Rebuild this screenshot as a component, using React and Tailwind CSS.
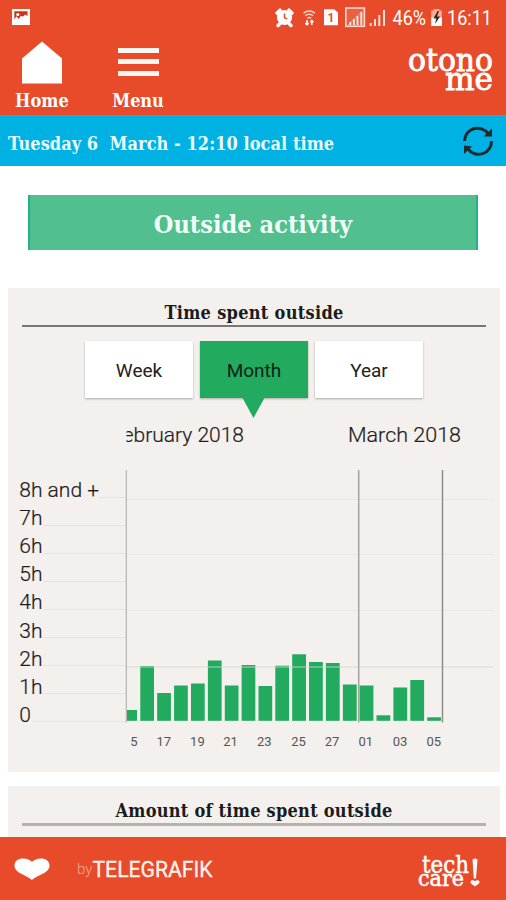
const bars = [
    { x: 127, w: 10, top: 710 },
    { x: 140.3, w: 13.7, top: 666 },
    { x: 157.2, w: 13.7, top: 693 },
    { x: 174.1, w: 13.7, top: 685.5 },
    { x: 191, w: 13.7, top: 683.5 },
    { x: 207.9, w: 13.7, top: 660.5 },
    { x: 224.8, w: 13.7, top: 685.5 },
    { x: 241.6, w: 13.7, top: 665 },
    { x: 258.5, w: 13.7, top: 686 },
    { x: 275.3, w: 13.7, top: 665.7 },
    { x: 292.2, w: 13.8, top: 654.3 },
    { x: 309, w: 13.8, top: 662 },
    { x: 325.9, w: 13.8, top: 663 },
    { x: 342.9, w: 13.8, top: 684.5 },
    { x: 359.6, w: 13.8, top: 685.5 },
    { x: 376.5, w: 13.8, top: 715.3 },
    { x: 393.4, w: 13.8, top: 687.5 },
    { x: 410.3, w: 13.8, top: 680 },
    { x: 427.2, w: 13.8, top: 717.3 },
];

const hours = ['8h and +', '7h', '6h', '5h', '4h', '3h', '2h', '1h', '0'];

const days = [
    { x: 134, label: '5' },
    { x: 163.8, label: '17' },
    { x: 197.4, label: '19' },
    { x: 230.5, label: '21' },
    { x: 264.3, label: '23' },
    { x: 298.6, label: '25' },
    { x: 332, label: '27' },
    { x: 365.8, label: '01' },
    { x: 400, label: '03' },
    { x: 433.7, label: '05' },
];

const slab = "font-['DejaVu_Serif_Condensed','DejaVu_Serif',serif] font-bold [font-stretch:condensed] whitespace-pre";

function StatusIcons() {
    return (
        <svg width="114" height="24" viewBox="272 6 114 24" fill="#fff">
            {/* alarm */}
            <path d="M280 10.200L277 13M289 10.200l3 2.800M279.500 24l-1.500 1.500M289.500 24l1.500 1.500" stroke="#fff" strokeWidth="3.500" strokeLinecap="round" />
            <circle cx="284.500" cy="17.500" r="7.600" />
            <path d="M284.500 13.500v4.200l2.700 1.200" fill="none" stroke="#e84b2a" strokeWidth="1.500" />
            {/* wifi */}
            <path d="M303.500 13.200q5.700-4.400 11.400 0M305.300 15.700q3.900-2.800 7.800 0M307.200 18q2-1.200 4 0" fill="none" stroke="#fbd5cb" strokeWidth="1.500" />
            <path d="M307 20v4.500m-1.600-1.400l1.600 1.600 1.600-1.600M311.800 25v-4.500m-1.600 1.600l1.600-1.600 1.600 1.600" fill="none" stroke="#fff" strokeWidth="1.500" />
            {/* sim */}
            <path d="M324 9.300h10l4 3.200v12.800h-14z" />
            <text x="331" y="22" fontSize="12" fontWeight="700" textAnchor="middle" fill="#e84b2a" fontFamily="Roboto, sans-serif">1</text>
            {/* signals */}
            <rect x="345.800" y="8" width="18.600" height="18.300" fill="#fff" fillOpacity="0.12" stroke="#fbd9d0" strokeWidth="1.600" />
            <path d="M348 25l14-13.500" stroke="#f7b6a5" strokeWidth="0.800" />
            <path d="M350.300 25v-3M353.900 25v-6M357.500 25v-9M361.300 25V12" stroke="#fde8e2" strokeWidth="1.900" />
            <path d="M370.700 26v-3M375 26v-7M379.300 26V15M384 26V10" stroke="#fbe0d8" strokeWidth="2" />
        </svg>
    );
}

function StatusBar() {
    return (
        <div className="flex h-9 items-center">
            <svg className="mb-0.5 ml-3" width="18" height="16" viewBox="0 0 18 16">
                <path d="M0 0h18v16H0z" fill="#fff" />
                <path d="M2.300 2.300h13.200v5l-2.200-1.700-2.200 2-2.400-.7-2.100 3-2-2.600-2.300 3z" fill="#cf3317" />
                <circle cx="5.800" cy="5.500" r="1.600" fill="#fff" />
            </svg>
            <div className="ml-auto flex items-center pr-3">
                <StatusIcons />
                <svg className="ml-1.5 overflow-visible" width="36" height="30" viewBox="0 0 36 30" fill="#fff" fontFamily="Roboto, sans-serif">
                    <text x="0.500" y="22.300" fontSize="20" textLength="33.500" lengthAdjust="spacingAndGlyphs">46%</text>
                </svg>
                <svg className="ml-0.5" width="13" height="20" viewBox="0 0 13 20">
                    <path d="M3.500 2.500V1h6v1.500h2.300V10H1.200V2.500z" fill="#f6ab97" />
                    <path d="M1.200 9.500h10.800v8.500H1.200z" fill="#fff" />
                    <path d="M7.700 3L3.500 10.500h2.800L5 16l5-7.500H7L9 3z" fill="#33221d" />
                </svg>
                <svg className="ml-[3px] overflow-visible" width="48" height="30" viewBox="0 0 48 30" fill="#fff" fontFamily="Roboto, sans-serif">
                    <text x="1" y="22.300" fontSize="20" textLength="45" lengthAdjust="spacingAndGlyphs">16:11</text>
                </svg>
            </div>
        </div>
    );
}

function Header() {
    return (
        <header className="h-[115px] bg-[#e84b2a] text-white">
            <StatusBar />
            <div className="flex h-[79px]">
                <div className="flex w-[84px] flex-col items-center pt-[5px]">
                    <svg width="42" height="43" viewBox="0 0 42 43">
                        <path d="M21 0.500L41 17.500V42.500H1V17.500z" fill="#fff" />
                    </svg>
                    <span className={`${slab} mt-[5px] text-[18px] leading-[24px] tracking-[0.1px]`}>Home</span>
                </div>
                <div className="ml-[26px] flex w-14 flex-col items-center pt-3">
                    <div className="flex h-[36px] w-[41px] flex-col gap-[6px]">
                        <div className="h-[5px] bg-[#fff5f1]"></div>
                        <div className="h-[5px] bg-[#fff5f1]"></div>
                        <div className="mt-px h-[5px] bg-[#fff5f1]"></div>
                    </div>
                    <span className={`${slab} mt-[5px] text-[18px] leading-[24px] tracking-[-0.1px]`}>Menu</span>
                </div>
                <svg className="ml-auto mr-2 mt-1" width="92" height="60" viewBox="406 40 92 60" fill="#fff" stroke="#fff" strokeWidth="0.900" fontFamily="DejaVu Serif, serif">
                    <text x="408" y="70.500" fontSize="32" textLength="85" lengthAdjust="spacingAndGlyphs">otono</text>
                    <text x="445" y="90" fontSize="32" textLength="48" lengthAdjust="spacingAndGlyphs">me</text>
                </svg>
            </div>
        </header>
    );
}

function DateBar() {
    return (
        <div className="flex h-[51px] items-center justify-between border-t border-[#8f858c] bg-[#00b2e3] pl-2 pr-3">
            <span className={`${slab} mt-1 text-[18px] tracking-[0.05px] text-[#e9faff]`}>Tuesday 6  March - 12:10 local time</span>
            <svg width="32" height="32" viewBox="463 125 32 32" fill="none">
                <path d="M465.500 141a13 13 0 0 1 23.500-7.500M492.500 141a13 13 0 0 1-23.500 8" stroke="#222a2c" strokeWidth="3" />
                <path d="M493 128.500v8h-8.500zM465 154v-8.500l8 1z" fill="#222a2c" />
            </svg>
        </div>
    );
}

function Tab({ label, active }) {
    return (
        <div className={`flex h-[57px] w-[108px] items-center justify-center pt-[3px] font-[Roboto,sans-serif] text-[19px] shadow-[0_1px_2px_rgba(0,0,0,0.3)] ${active ? 'relative bg-[#22aa5f] text-[#0c2416]' : 'bg-white text-[#222]'}`}>
            {label}
            {active && (
                <svg className="absolute left-[42px] top-[56px]" width="23" height="21" viewBox="0 0 23 21">
                    <path d="M0 0h23L11.500 21z" fill="#22aa5f" />
                </svg>
            )}
        </div>
    );
}

function Chart() {
    return (
        <svg className="block" width="492" height="352" viewBox="8 420 492 352" fontFamily="Roboto, sans-serif">
            <defs>
                <clipPath id="plot">
                    <rect x="126.500" y="420" width="366" height="352" />
                </clipPath>
            </defs>
            <g fontSize="21" fontWeight="300" fill="#1c1c1c" stroke="#1c1c1c" strokeWidth="0.200">
                <text x="244" y="441.500" textAnchor="end" clipPath="url(#plot)">February 2018</text>
                <text x="348" y="441.500" textLength="113" lengthAdjust="spacingAndGlyphs">March 2018</text>
                {hours.map((label, i) => (
                    <text key={label} x="19.300" y={497 + i * 28.1}>{label}</text>
                ))}
            </g>
            {hours.map((label, i) => (
                <path key={label} d={`M${i === 0 ? 98 : i === 8 ? 32 : 43} ${497.5 + i * 28}H126`} stroke="#e5e3df" />
            ))}
            {bars.map((bar) => (
                <rect key={bar.x} x={bar.x} y={bar.top} width={bar.w} height={720.8 - bar.top} fill="#22aa5f" />
            ))}
            <path d="M126 499.500H493M126 554.500H493M126 610.500H493" stroke="#e9e7e3" />
            <path d="M126 667H493" stroke="#d5d9d0" strokeOpacity="0.550" strokeWidth="1.300" />
            <path d="M126.300 470V722.500" stroke="#b5b3b0" strokeWidth="1.200" />
            <path d="M358.700 470V722.500" stroke="#a5a3a0" strokeWidth="1.500" />
            <path d="M442.500 470V722.500" stroke="#8f8d8a" strokeWidth="1.500" />
            <g fontSize="13" fill="#555" textAnchor="middle">
                {days.map((day) => (
                    <text key={day.label} x={day.x} y="746">{day.label}</text>
                ))}
            </g>
        </svg>
    );
}

function Footer() {
    return (
        <footer className="flex h-[63px] shrink-0 items-center bg-[#e84b2a] text-white">
            <svg className="ml-3.5" width="36" height="22" viewBox="0 0 36 22">
                <path d="M18 22C14 17.500.5 15.500.5 7.500.5 3 4.500.5 9 .5c4 0 7 1.300 9 3.500C20 1.800 23 .5 27 .5c4.500 0 8.500 2.500 8.500 7C35.500 15.500 22 17.500 18 22z" fill="#fff" />
            </svg>
            <svg className="ml-[27px]" width="138" height="36" viewBox="77 852 138 36" fontFamily="Roboto, sans-serif">
                <text x="77" y="875" fontSize="15" fontWeight="300" fill="#f6a892">by</text>
                <text x="92.500" y="878" fontSize="21.500" fill="#fff3ef" stroke="#fff3ef" strokeWidth="0.300" textLength="120" lengthAdjust="spacingAndGlyphs">TELEGRAFIK</text>
            </svg>
            <svg className="ml-auto mr-6" width="66" height="54" viewBox="414 842 66 54" fill="#fff" fontFamily="DejaVu Serif, serif">
                <g stroke="#fff" strokeWidth="0.500">
                    <text x="420" y="872.500" fontSize="25" textLength="47" lengthAdjust="spacingAndGlyphs">tech</text>
                    <text x="416" y="886" fontSize="22" textLength="46" lengthAdjust="spacingAndGlyphs">care</text>
                </g>
                <path d="M470.500 859.500q2.500-2 5 0L474 878.500h-2.200z" />
                <path d="M473 886.500c-2-2-4.500-2.300-4.500-4.500 0-2.300 3.500-2.300 4.500-.5 1-1.800 4.500-1.800 4.500.5 0 2.200-2.500 2.500-4.500 4.500z" />
            </svg>
        </footer>
    );
}

export default function App() {
    return (
        <div className="flex h-[900px] w-[506px] flex-col overflow-hidden bg-white">
            <Header />
            <DateBar />
            <main className="h-[671px] overflow-hidden">
                <div className={`${slab} mx-[28px] mt-[29px] flex h-[55px] items-center justify-center border-x-2 border-[#24b183] bg-[#52c08e] pt-1 text-[25px] tracking-[0.05px] text-[#f1fff8]`}>
                    Outside activity
                </div>
                <section className="ml-2 mt-[38px] h-[484px] w-[492px] bg-[#f4f0ed]">
                    <h2 className={`${slab} mx-[14px] h-[39px] border-b-2 border-[#777] pt-[13px] text-center text-[18px] leading-6 tracking-[0.3px] text-[#1b1b1b]`}>Time spent outside</h2>
                    <div className="flex h-[93px] justify-center gap-[7px] pt-[14px]">
                        <Tab label="Week" />
                        <Tab label="Month" active />
                        <Tab label="Year" />
                    </div>
                    <Chart />
                </section>
                <section className="ml-2 mt-3.5 h-[60px] w-[492px] bg-[#f4f0ed]">
                    <h2 className={`${slab} mx-[14px] h-[40px] border-b-[3px] border-[#b3b2ae] pt-[13px] text-center text-[18px] leading-6 tracking-[0.26px] text-[#1b1b1b]`}>Amount of time spent outside</h2>
                </section>
            </main>
            <Footer />
        </div>
    );
}
